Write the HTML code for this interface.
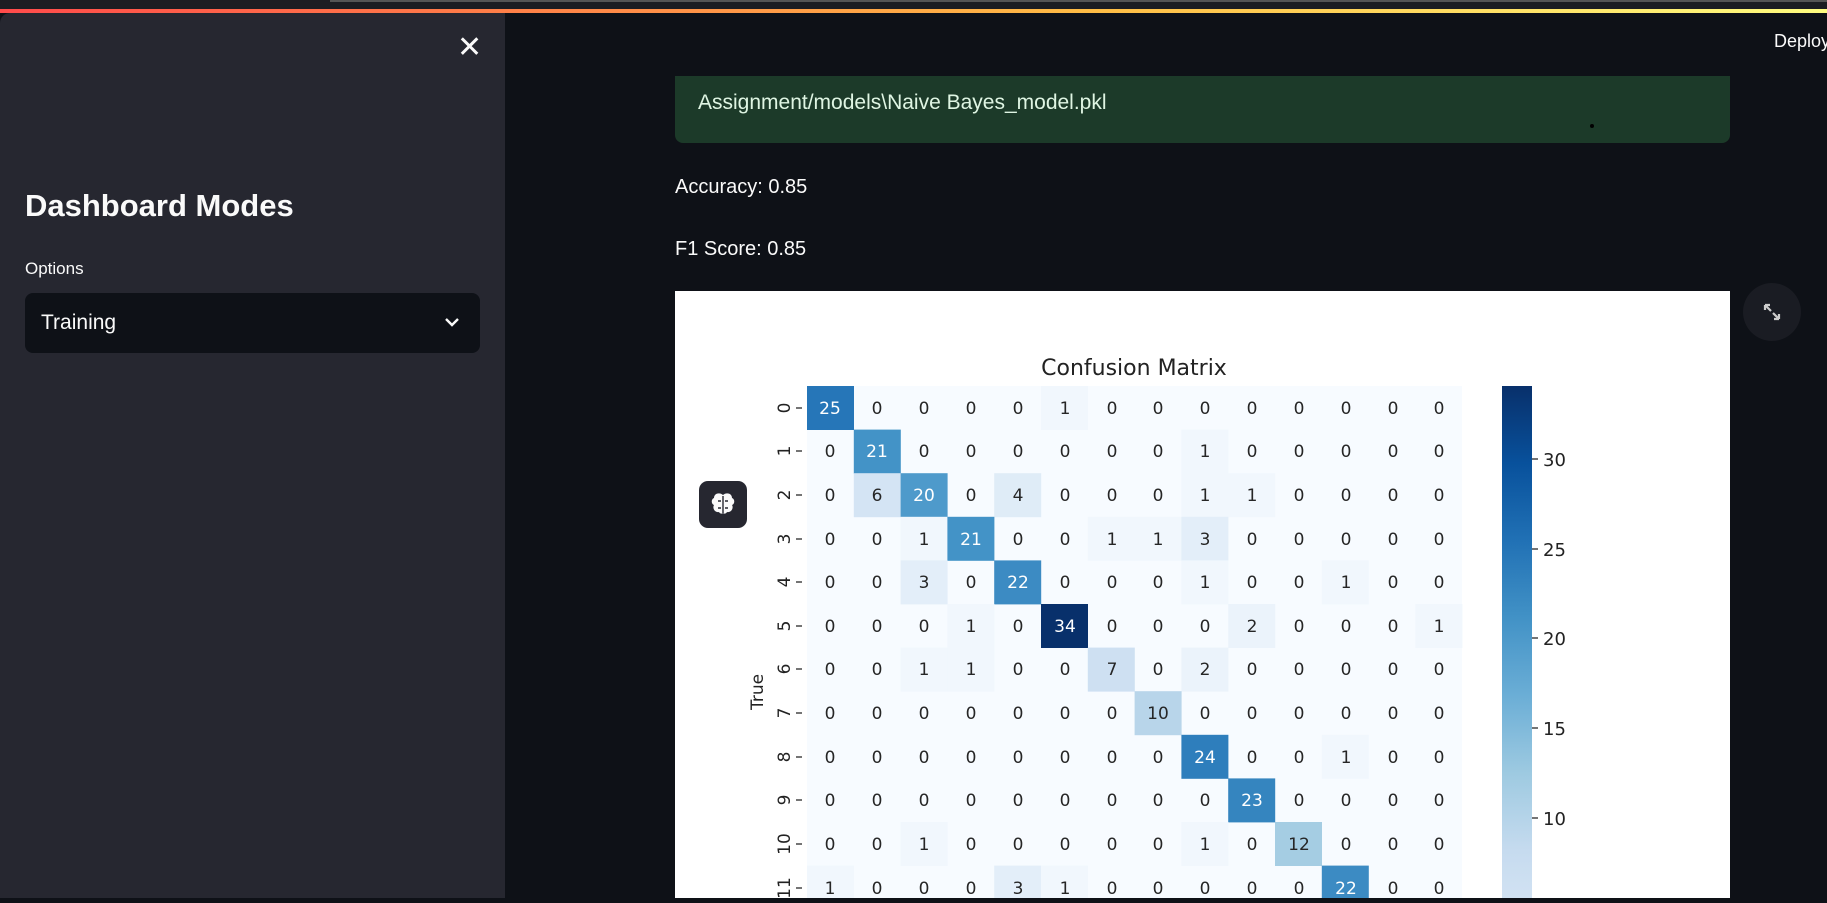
<!DOCTYPE html>
<html><head><meta charset="utf-8"><style>
*{margin:0;padding:0;box-sizing:border-box}
body{width:1827px;height:898px;overflow:hidden;background:#0e1117;font-family:"Liberation Sans",sans-serif;color:#fafafa;position:relative}
.topstrip{position:absolute;left:0;top:0;width:1827px;height:12px;background:#1c1d22}
.topstrip:after{content:"";position:absolute;left:330px;right:0;top:0;height:2px;background:#555}
.grad{position:absolute;left:0;top:9px;width:1827px;height:4px;background:linear-gradient(90deg,#ff4b4b,#ffbd45 60%,#fffd80)}
.side{position:absolute;left:0;top:13px;width:505px;height:885px;background:#262730;border-top-left-radius:10px}
.x{position:absolute;left:457px;top:17px;font-size:30px;color:#fafafa}
h1{position:absolute;left:25px;top:188px;font-size:31px;font-weight:bold}
.opt{position:absolute;left:25px;top:259px;font-size:17px}
.sel{position:absolute;left:25px;top:293px;width:455px;height:60px;background:#0e1117;border-radius:8px;font-size:21px;padding:18px 0 0 16px}
.chev{position:absolute;right:20px;top:24px}
.green{position:absolute;left:675px;top:60px;width:1055px;height:83px;background:#1c3a29;border-radius:0 0 8px 8px;color:#dff5e3;font-size:21px;padding:31px 0 0 23px}
.hdr{position:absolute;left:505px;top:13px;width:1322px;height:63px;background:#0e1117}
.deploy{position:absolute;left:1774px;top:31px;font-size:18px}
.p{position:absolute;left:675px;font-size:20px}
.img{position:absolute;left:675px;top:291px;width:1055px;height:607px;background:#fff}
.exp{position:absolute;left:1743px;top:283px;width:58px;height:58px;border-radius:50%;background:#1a1c23}
.brain{position:absolute;left:699px;top:481px;width:48px;height:47px;border-radius:9px;background:#262730}
</style></head><body>
<div class="topstrip"></div><div class="grad"></div>
<div class="side">
<div class="x">✕</div>
</div>
<h1>Dashboard Modes</h1>
<div class="opt">Options</div>
<div class="sel">Training<svg class="chev" width="16" height="11" viewBox="0 0 16 11"><path d="M2 2l6 6 6-6" stroke="#fafafa" stroke-width="2.4" fill="none"/></svg></div>
<div class="green">Assignment/models\Naive Bayes_model.pkl</div>
<div class="hdr"></div>
<div class="deploy">Deploy</div>
<div style="position:absolute;left:1590px;top:124px;width:4px;height:4px;border-radius:50%;background:#000"></div>
<div class="p" style="top:176px">Accuracy: 0.85</div>
<div class="p" style="top:238px">F1 Score: 0.85</div>
<div class="exp"><svg width="58" height="58" viewBox="0 0 58 58"><path d="M22 22l6 6M22 22v5M22 22h5M36 36l-6-6M36 36v-5M36 36h-5" stroke="#ccc" stroke-width="2.2" fill="none"/></svg></div>
<div class="img">
<svg width="1055" height="607" viewBox="0 0 1055 607" font-family="DejaVu Sans, sans-serif" font-size="16">
<defs><linearGradient id="cb" x1="0" y1="0" x2="0" y2="1">
<stop offset="0" stop-color="#08306b"/><stop offset=".149" stop-color="#08519c"/><stop offset=".298" stop-color="#2171b5"/><stop offset=".447" stop-color="#4292c6"/><stop offset=".596" stop-color="#6baed6"/><stop offset=".746" stop-color="#9ecae1"/><stop offset=".895" stop-color="#c6dbef"/><stop offset="1" stop-color="#d3e3f3"/></linearGradient></defs>
<text x="459" y="84" font-size="22" text-anchor="middle" fill="#222">Confusion Matrix</text>
<rect x="132" y="95" width="655" height="520" fill="#f7fbff"/>
<g>
<rect x="132" y="95" width="47" height="44" fill="#2676b8"/>
<rect x="366" y="95" width="47" height="44" fill="#f1f7fd"/>
<rect x="178.8" y="138.6" width="47" height="44" fill="#4393c7"/>
<rect x="506.4" y="138.6" width="47" height="44" fill="#f1f7fd"/>
<rect x="178.8" y="182.2" width="47" height="44" fill="#d4e4f4"/>
<rect x="225.6" y="182.2" width="47" height="44" fill="#4e9acb"/>
<rect x="319.2" y="182.2" width="47" height="44" fill="#dfecf7"/>
<rect x="506.4" y="182.2" width="47" height="44" fill="#f1f7fd"/>
<rect x="553.2" y="182.2" width="47" height="44" fill="#f1f7fd"/>
<rect x="225.6" y="225.8" width="47" height="44" fill="#f1f7fd"/>
<rect x="272.4" y="225.8" width="47" height="44" fill="#4393c7"/>
<rect x="412.8" y="225.8" width="47" height="44" fill="#f1f7fd"/>
<rect x="459.6" y="225.8" width="47" height="44" fill="#f1f7fd"/>
<rect x="506.4" y="225.8" width="47" height="44" fill="#e3eef9"/>
<rect x="225.6" y="269.4" width="47" height="44" fill="#e3eef9"/>
<rect x="319.2" y="269.4" width="47" height="44" fill="#3c8bc3"/>
<rect x="506.4" y="269.4" width="47" height="44" fill="#f1f7fd"/>
<rect x="646.8" y="269.4" width="47" height="44" fill="#f1f7fd"/>
<rect x="272.4" y="313" width="47" height="44" fill="#f1f7fd"/>
<rect x="366" y="313" width="47" height="44" fill="#08306b"/>
<rect x="553.2" y="313" width="47" height="44" fill="#ebf3fb"/>
<rect x="740.4" y="313" width="47" height="44" fill="#f1f7fd"/>
<rect x="225.6" y="356.6" width="47" height="44" fill="#f1f7fd"/>
<rect x="272.4" y="356.6" width="47" height="44" fill="#f1f7fd"/>
<rect x="412.8" y="356.6" width="47" height="44" fill="#cee0f2"/>
<rect x="506.4" y="356.6" width="47" height="44" fill="#ebf3fb"/>
<rect x="459.6" y="400.2" width="47" height="44" fill="#b8d5ea"/>
<rect x="506.4" y="443.8" width="47" height="44" fill="#2e7ebc"/>
<rect x="646.8" y="443.8" width="47" height="44" fill="#f1f7fd"/>
<rect x="553.2" y="487.4" width="47" height="44" fill="#3585bf"/>
<rect x="225.6" y="531" width="47" height="44" fill="#f1f7fd"/>
<rect x="506.4" y="531" width="47" height="44" fill="#f1f7fd"/>
<rect x="600" y="531" width="47" height="44" fill="#a5cde3"/>
<rect x="132" y="574.6" width="47" height="44" fill="#f1f7fd"/>
<rect x="319.2" y="574.6" width="47" height="44" fill="#e3eef9"/>
<rect x="366" y="574.6" width="47" height="44" fill="#f1f7fd"/>
<rect x="646.8" y="574.6" width="47" height="44" fill="#3c8bc3"/>
</g>
<g text-anchor="middle" fill="#262626" font-size="17">
<text x="155" y="123" fill="#fff">25</text><text x="202" y="123">0</text><text x="249" y="123">0</text><text x="296" y="123">0</text><text x="343" y="123">0</text><text x="390" y="123">1</text><text x="437" y="123">0</text><text x="483" y="123">0</text><text x="530" y="123">0</text><text x="577" y="123">0</text><text x="624" y="123">0</text><text x="671" y="123">0</text><text x="718" y="123">0</text><text x="764" y="123">0</text>
<text x="155" y="166">0</text><text x="202" y="166" fill="#fff">21</text><text x="249" y="166">0</text><text x="296" y="166">0</text><text x="343" y="166">0</text><text x="390" y="166">0</text><text x="437" y="166">0</text><text x="483" y="166">0</text><text x="530" y="166">1</text><text x="577" y="166">0</text><text x="624" y="166">0</text><text x="671" y="166">0</text><text x="718" y="166">0</text><text x="764" y="166">0</text>
<text x="155" y="210">0</text><text x="202" y="210">6</text><text x="249" y="210" fill="#fff">20</text><text x="296" y="210">0</text><text x="343" y="210">4</text><text x="390" y="210">0</text><text x="437" y="210">0</text><text x="483" y="210">0</text><text x="530" y="210">1</text><text x="577" y="210">1</text><text x="624" y="210">0</text><text x="671" y="210">0</text><text x="718" y="210">0</text><text x="764" y="210">0</text>
<text x="155" y="254">0</text><text x="202" y="254">0</text><text x="249" y="254">1</text><text x="296" y="254" fill="#fff">21</text><text x="343" y="254">0</text><text x="390" y="254">0</text><text x="437" y="254">1</text><text x="483" y="254">1</text><text x="530" y="254">3</text><text x="577" y="254">0</text><text x="624" y="254">0</text><text x="671" y="254">0</text><text x="718" y="254">0</text><text x="764" y="254">0</text>
<text x="155" y="297">0</text><text x="202" y="297">0</text><text x="249" y="297">3</text><text x="296" y="297">0</text><text x="343" y="297" fill="#fff">22</text><text x="390" y="297">0</text><text x="437" y="297">0</text><text x="483" y="297">0</text><text x="530" y="297">1</text><text x="577" y="297">0</text><text x="624" y="297">0</text><text x="671" y="297">1</text><text x="718" y="297">0</text><text x="764" y="297">0</text>
<text x="155" y="341">0</text><text x="202" y="341">0</text><text x="249" y="341">0</text><text x="296" y="341">1</text><text x="343" y="341">0</text><text x="390" y="341" fill="#fff">34</text><text x="437" y="341">0</text><text x="483" y="341">0</text><text x="530" y="341">0</text><text x="577" y="341">2</text><text x="624" y="341">0</text><text x="671" y="341">0</text><text x="718" y="341">0</text><text x="764" y="341">1</text>
<text x="155" y="384">0</text><text x="202" y="384">0</text><text x="249" y="384">1</text><text x="296" y="384">1</text><text x="343" y="384">0</text><text x="390" y="384">0</text><text x="437" y="384">7</text><text x="483" y="384">0</text><text x="530" y="384">2</text><text x="577" y="384">0</text><text x="624" y="384">0</text><text x="671" y="384">0</text><text x="718" y="384">0</text><text x="764" y="384">0</text>
<text x="155" y="428">0</text><text x="202" y="428">0</text><text x="249" y="428">0</text><text x="296" y="428">0</text><text x="343" y="428">0</text><text x="390" y="428">0</text><text x="437" y="428">0</text><text x="483" y="428">10</text><text x="530" y="428">0</text><text x="577" y="428">0</text><text x="624" y="428">0</text><text x="671" y="428">0</text><text x="718" y="428">0</text><text x="764" y="428">0</text>
<text x="155" y="472">0</text><text x="202" y="472">0</text><text x="249" y="472">0</text><text x="296" y="472">0</text><text x="343" y="472">0</text><text x="390" y="472">0</text><text x="437" y="472">0</text><text x="483" y="472">0</text><text x="530" y="472" fill="#fff">24</text><text x="577" y="472">0</text><text x="624" y="472">0</text><text x="671" y="472">1</text><text x="718" y="472">0</text><text x="764" y="472">0</text>
<text x="155" y="515">0</text><text x="202" y="515">0</text><text x="249" y="515">0</text><text x="296" y="515">0</text><text x="343" y="515">0</text><text x="390" y="515">0</text><text x="437" y="515">0</text><text x="483" y="515">0</text><text x="530" y="515">0</text><text x="577" y="515" fill="#fff">23</text><text x="624" y="515">0</text><text x="671" y="515">0</text><text x="718" y="515">0</text><text x="764" y="515">0</text>
<text x="155" y="559">0</text><text x="202" y="559">0</text><text x="249" y="559">1</text><text x="296" y="559">0</text><text x="343" y="559">0</text><text x="390" y="559">0</text><text x="437" y="559">0</text><text x="483" y="559">0</text><text x="530" y="559">1</text><text x="577" y="559">0</text><text x="624" y="559">12</text><text x="671" y="559">0</text><text x="718" y="559">0</text><text x="764" y="559">0</text>
<text x="155" y="603">1</text><text x="202" y="603">0</text><text x="249" y="603">0</text><text x="296" y="603">0</text><text x="343" y="603">3</text><text x="390" y="603">1</text><text x="437" y="603">0</text><text x="483" y="603">0</text><text x="530" y="603">0</text><text x="577" y="603">0</text><text x="624" y="603">0</text><text x="671" y="603" fill="#fff">22</text><text x="718" y="603">0</text><text x="764" y="603">0</text>
</g>
<g fill="#222" text-anchor="middle" font-size="17">
<g stroke="#222" stroke-width="1.2"><path d="M121 117h6M121 160h6M121 204h6M121 248h6M121 291h6M121 335h6M121 378h6M121 422h6M121 466h6M121 509h6M121 553h6M121 597h6"/></g>
<text transform="translate(115 117) rotate(-90)">0</text>
<text transform="translate(115 160) rotate(-90)">1</text>
<text transform="translate(115 204) rotate(-90)">2</text>
<text transform="translate(115 248) rotate(-90)">3</text>
<text transform="translate(115 291) rotate(-90)">4</text>
<text transform="translate(115 335) rotate(-90)">5</text>
<text transform="translate(115 378) rotate(-90)">6</text>
<text transform="translate(115 422) rotate(-90)">7</text>
<text transform="translate(115 466) rotate(-90)">8</text>
<text transform="translate(115 509) rotate(-90)">9</text>
<text transform="translate(115 553) rotate(-90)">10</text>
<text transform="translate(115 597) rotate(-90)">11</text>
<text transform="translate(88 401) rotate(-90)">True</text>
</g>
<rect x="827" y="95" width="30" height="520" fill="url(#cb)"/>
<g stroke="#222" stroke-width="1.2"><path d="M857 168h6M857 258h6M857 347h6M857 437h6M857 527h6"/></g>
<g fill="#222" font-size="18"><text x="868" y="175">30</text><text x="868" y="265">25</text><text x="868" y="354">20</text><text x="868" y="444">15</text><text x="868" y="534">10</text></g>
</svg>
</div>
<div class="brain"><svg width="48" height="47" viewBox="0 0 48 47"><path d="M24 14c-3-3-9-2-9 3-3 1-3 6 0 7-2 3 1 8 5 7 1 2 3 2 4 1zM24 14c3-3 9-2 9 3 3 1 3 6 0 7 2 3-1 8-5 7-1 2-3 2-4 1z" fill="#fafafa"/><path d="M24 15v17M19 20h3M26 20h3M19 27h3M26 27h3" stroke="#262730" stroke-width="1.4"/></svg></div>
</body></html>
